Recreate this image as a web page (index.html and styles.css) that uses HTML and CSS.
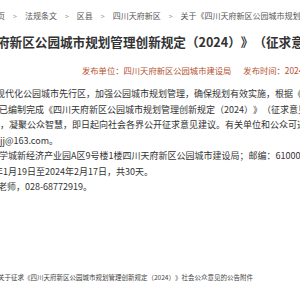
FILE: index.html
```html
<!DOCTYPE html>
<html lang="zh-CN">
<head>
<meta charset="utf-8">
<title>关于《四川天府新区公园城市规划管理创新规定（2024）》（征求意见稿）公开征求意见的公告</title>
<link rel="stylesheet" href="styles.css">
</head>
<body>
<div class="page">
  <nav class="crumbs">
    <span class="crumb first">页</span>
    <span class="sep">&gt;</span>
    <span class="crumb">法规条文</span>
    <span class="sep">&gt;</span>
    <span class="crumb">区县</span>
    <span class="sep">&gt;</span>
    <span class="crumb">四川天府新区</span>
    <span class="sep">&gt;</span>
    <span class="crumb">关于《四川天府新区公园城市规划管理创新规定（2024）》（征求意见稿）公开征求意见的公告</span>
  </nav>

  <h1 class="title">府新区公园城市规划管理创新规定（2024）》（征求意见稿）公开征求意见的公告</h1>

  <div class="meta">
    <span class="meta-item">发布单位：四川天府新区公园城市建设局</span>
    <span class="meta-item">发布时间：2024-01-19</span>
  </div>

  <div class="content">
    <p class="line cut-4">现代化公园城市先行区，加强公园城市规划管理，确保规划有效实施，根据《中华人民共和国城乡规划法》</p>
    <p class="line cut-1">已编制完成《四川天府新区公园城市规划管理创新规定（2024）》（征求意见稿）</p>
    <p class="line">，凝聚公众智慧，即日起向社会各界公开征求意见建议。有关单位和公众可通过以下方式</p>
    <p class="line">jj@163.com。</p>
    <p class="line cut-1">学城新经济产业园A区9号楼1楼四川天府新区公园城市建设局；邮编：610000。</p>
    <p class="line cut-6">年1月19日至2024年2月17日，共30天。</p>
    <p class="line cut-2">老师，028-68772919。</p>
  </div>

  <div class="attach">
    <span class="attach-link cut-2">关于征求《四川天府新区公园城市规划管理创新规定（2024）》社会公众意见的公告附件</span>
  </div>
</div>
</body>
</html>
```

FILE: styles.css
```css
html, body {
  margin: 0;
  padding: 0;
  background: #ffffff;
  overflow: hidden;
}

body {
  font-family: "Noto Sans CJK SC", "Microsoft YaHei", "Noto Sans", sans-serif;
  color: #333333;
  text-spacing-trim: space-all;
}

.page {
  width: 300px;
  height: 300px;
  overflow: hidden;
  padding-top: 8px;
  box-sizing: border-box;
}

.crumbs {
  display: flex;
  align-items: center;
  gap: 7px;
  height: 16px;
  font-size: 8px;
  line-height: 16px;
  color: #555555;
  white-space: nowrap;
}

.crumb.first {
  margin-left: -3px;
}

.sep {
  color: #999999;
  font-size: 7px;
  padding: 0 1px;
}

.title {
  margin: 8px 0 0 -3px;
  font-size: 12.6px;
  line-height: 20px;
  font-weight: bold;
  color: #333333;
  white-space: nowrap;
}

.meta {
  display: flex;
  gap: 12px;
  margin: 12px 0 0 82px;
  font-size: 8.3px;
  line-height: 12px;
  color: #b5512e;
  white-space: nowrap;
}

.content {
  margin-top: 10px;
  font-size: 9px;
  line-height: 15.5px;
  color: #333333;
}

.line {
  margin: 0;
  white-space: nowrap;
}

.cut-1 { text-indent: -1px; }
.cut-2 { text-indent: -2px; }
.cut-4 { text-indent: -4px; }
.cut-6 { text-indent: -6px; }

.attach {
  margin-top: 77px;
  font-size: 6.5px;
  line-height: 10px;
  color: #444444;
  white-space: nowrap;
}

.attach-link {
  display: block;
}
```
